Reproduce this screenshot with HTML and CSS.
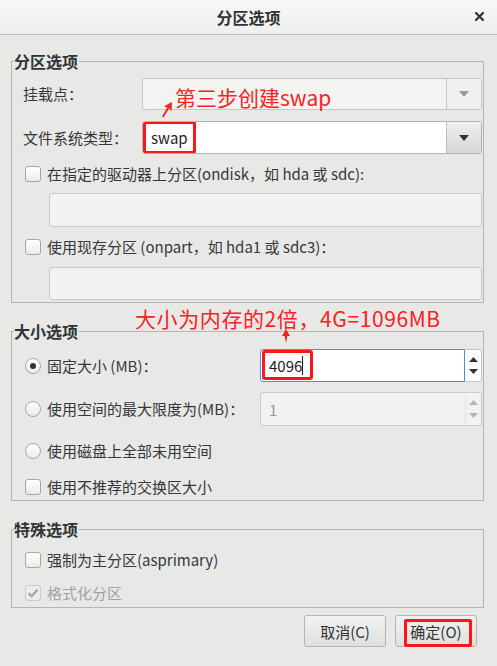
FILE: index.html
```html
<!DOCTYPE html>
<html lang="zh-CN">
<head>
<meta charset="utf-8">
<title>分区选项</title>
<link rel="stylesheet" href="styles.css">
</head>
<body>
<div class="dialog">
  <header class="titlebar">
    <span></span>
    <span class="title">分区选项</span>
    <span class="close"><svg width="9" height="9" viewBox="0 0 9 9"><path d="M1 1L8 8M8 1L1 8" stroke="#2e3436" stroke-width="2.2" stroke-linecap="square"/></svg></span>
  </header>

  <fieldset class="group g1">
    <legend>分区选项</legend>
    <div class="gbody">
      <div class="form-row r-mount">
        <span class="lbl">挂载点<span class="colon">：</span></span>
        <div class="combo combo-soft">
          <div class="combo-field"></div>
          <div class="combo-btn"><svg width="10" height="6" viewBox="0 0 10 6"><path d="M0 0H10L5 6Z" fill="#9b9b99"/></svg></div>
        </div>
      </div>
      <div class="form-row r-fs">
        <span class="lbl">文件系统类型<span class="colon">：</span></span>
        <div class="combo">
          <div class="combo-field"><span class="mark mark-swap">swap</span></div>
          <div class="combo-btn combo-btn-strong"><svg width="10" height="6" viewBox="0 0 10 6"><path d="M0 0H10L5 6Z" fill="#2e3436"/></svg></div>
        </div>
      </div>
      <div class="check-row c-ondisk"><span class="chk"></span><span>在指定的驱动器上分区(ondisk，如 hda 或 sdc):</span></div>
      <div class="entry e1"></div>
      <div class="check-row c-onpart"><span class="chk"></span><span>使用现存分区 (onpart，如 hda1 或 sdc3)<span class="colon">：</span></span></div>
      <div class="entry e2"></div>
    </div>
  </fieldset>

  <fieldset class="group g2">
    <legend>大小选项</legend>
    <div class="gbody">
      <div class="form-row2 s1">
        <div class="check-row"><span class="radio on"></span><span>固定大小 (MB)<span class="colon">：</span></span></div>
        <div class="spin">
          <div class="spin-field focus"><span class="mark mark-num">4096<i class="caret"></i></span></div>
          <div class="spin-btns">
            <svg width="9" height="5" viewBox="0 0 9 5"><path d="M0 5H9L4.5 0Z" fill="#2e3436"/></svg>
            <svg width="9" height="5" viewBox="0 0 9 5"><path d="M0 0H9L4.5 5Z" fill="#2e3436"/></svg>
          </div>
        </div>
      </div>
      <div class="form-row2 s2">
        <div class="check-row"><span class="radio"></span><span>使用空间的最大限度为(MB)<span class="colon">：</span></span></div>
        <div class="spin disabled">
          <div class="spin-field"><span class="spin-val">1</span></div>
          <div class="spin-btns">
            <svg width="9" height="5" viewBox="0 0 9 5"><path d="M0 5H9L4.5 0Z" fill="#b3b3b1"/></svg>
            <svg width="9" height="5" viewBox="0 0 9 5"><path d="M0 0H9L4.5 5Z" fill="#b3b3b1"/></svg>
          </div>
        </div>
      </div>
      <div class="check-row s3"><span class="radio"></span><span>使用磁盘上全部未用空间</span></div>
      <div class="check-row s4"><span class="chk"></span><span>使用不推荐的交换区大小</span></div>
    </div>
  </fieldset>

  <fieldset class="group g3">
    <legend>特殊选项</legend>
    <div class="gbody">
      <div class="check-row p1"><span class="chk"></span><span>强制为主分区(asprimary)</span></div>
      <div class="check-row p2 dim"><span class="chk chk-dis"><svg width="12" height="10" viewBox="0 0 12 10"><path d="M1.5 5.2L4.6 8.2L10.5 1.6" fill="none" stroke="#a9a9a7" stroke-width="2.4"/></svg></span><span>格式化分区</span></div>
    </div>
  </fieldset>

  <div class="actions">
    <button class="btn">取消(C)</button>
    <button class="btn btn-ok">确定(O)<span class="mark-ok"></span></button>
  </div>

  <div class="anno anno1">第三步创建swap</div>
  <svg class="arrow1" width="16" height="18" viewBox="0 0 16 18"><path d="M13 1L12.5 10L10 7.6L4.5 16.5L3 15.6L8.2 6.4L5 5.2Z" fill="#f52222"/></svg>
  <div class="anno anno2">大小为内存的2倍，4G=1096MB</div>
  <svg class="arrow2" width="10" height="15" viewBox="0 0 10 15"><path d="M5 0L9 7H6.4L5 14L3.6 7H1Z" fill="#f52222"/></svg>
</div>
</body>
</html>
```

FILE: styles.css
```css
* { box-sizing: border-box; }
html, body { margin: 0; padding: 0; }
body {
  width: 497px;
  height: 666px;
  overflow: hidden;
  background: #e8e8e7;
  font-family: "Noto Sans CJK SC", "Noto Sans", sans-serif;
  font-size: 15px;
  color: #33383a;
}
.dialog { position: relative; height: 666px; }

.titlebar {
  height: 35px;
  border-bottom: 1px solid #bcbcb9;
  background: linear-gradient(#f7f7f6, #efefee);
  display: grid;
  grid-template-columns: 1fr auto 1fr;
  align-items: center;
}
.title { font-weight: bold; font-size: 16px; line-height: 20px; color: #2e3436; }
.close { justify-self: end; padding-right: 13px; display: flex; margin-top: -1px; }

.colon { font-family: "Noto Sans CJK JP", "Noto Sans CJK SC", sans-serif; }

.group {
  margin: 16px 13px 0 11px;
  padding: 0 1px 2px 2px;
  border: 1px solid #b4b4b1;
  min-width: 0;
}
.group legend {
  padding: 0 1px 0 0;
  font-weight: bold;
  font-size: 16px;
  line-height: 20px;
  color: #2e3436;
}
.gbody { padding-left: 9px; }
.g2 { margin-top: 18px; padding-bottom: 3px; }
.g3 { margin-top: 18px; padding-bottom: 4px; }

.form-row { display: grid; grid-template-columns: 119px 1fr; align-items: center; }
.form-row2 { display: grid; grid-template-columns: 237px 1fr; align-items: center; }
.lbl { line-height: 20px; }
.r-mount { margin-top: 7px; height: 32px; }
.r-fs { margin-top: 11px; height: 33px; }

.combo {
  display: flex;
  height: 100%;
  border: 1px solid #b3b3b0;
  border-radius: 3px;
  overflow: hidden;
  background: #fff;
}
.combo-field { flex: 1; display: flex; }
.combo-btn {
  width: 35px;
  border-left: 1px solid #c6c6c3;
  display: flex;
  align-items: center;
  justify-content: center;
  background: #f0f0ef;
}
.combo-btn-strong { background: linear-gradient(#efefee, #d6d6d4); border-left-color: #bdbdba; }
.combo-soft { background: #f3f3f2; border-color: #c6c6c3; }

.mark { border: 3px solid #ff1515; border-radius: 3px; display: flex; align-items: center; color: #1e1e1e; }
.mark-swap { width: 53px; height: 33px; margin-top: -1px; padding-left: 5px; }
.mark-num { width: 51px; height: 30px; margin-left: 1px; padding-left: 4px; }
.caret { display: inline-block; width: 1px; height: 19px; background: #1e1e1e; margin-left: 0; }

.check-row { display: flex; align-items: center; gap: 6px; height: 20px; padding-left: 2px; line-height: 20px; white-space: nowrap; }
.c-ondisk { margin-top: 10px; }
.c-onpart { margin-top: 10px; }
.chk {
  width: 16px; height: 16px; flex: none;
  border: 1px solid #a6a6a3;
  border-radius: 3px;
  background: linear-gradient(#ffffff, #ebebea);
  display: flex; align-items: center; justify-content: center;
}
.chk-dis { border-color: #c9c9c6; background: #ececeb; }
.radio {
  width: 16px; height: 16px; flex: none;
  border: 1px solid #a6a6a3;
  border-radius: 50%;
  background: linear-gradient(#ffffff, #ebebea);
  display: flex; align-items: center; justify-content: center;
}
.radio.on::after { content: ""; width: 6px; height: 6px; border-radius: 50%; background: #2e3436; }
.dim { color: #a2a2a0; }

.entry {
  margin-left: 26px;
  border: 1px solid #c9c9c6;
  border-radius: 3px;
  background: #f2f2f1;
}
.e1 { margin-top: 9px; height: 34px; }
.e2 { margin-top: 10px; height: 33px; }

.s1 { margin-top: 8px; height: 33px; }
.s2 { margin-top: 10px; height: 34px; }
.s3 { margin-top: 15px; }
.s4 { margin-top: 16px; }
.p1 { margin-top: 11px; }
.p2 { margin-top: 13px; }

.spin { display: flex; height: 100%; }
.spin-field {
  flex: 1;
  border: 1px solid #c6c6c3;
  border-right: none;
  border-radius: 3px 0 0 3px;
  background: #fff;
  display: flex;
  align-items: flex-start;
}
.spin-field.focus { border: 1px solid #4a90d9; border-right: 1px solid #4a90d9; }
.spin-btns {
  width: 17px;
  border: 1px solid #c6c6c3;
  border-left: none;
  border-radius: 0 3px 3px 0;
  background: #fff;
  display: flex;
  flex-direction: column;
  justify-content: space-around;
  align-items: center;
  padding: 3px 0;
}
.spin.disabled .spin-field, .spin.disabled .spin-btns { background: #f2f2f1; border-color: #cbcbc8; }
.spin.disabled .spin-btns { border-left: 1px solid #e2e2e0; }
.spin-val { color: #9a9a98; align-self: center; padding-left: 8px; }

.actions { display: flex; justify-content: flex-end; gap: 9px; padding-right: 20px; margin-top: 7px; }
.btn {
  position: relative;
  width: 82px;
  height: 32px;
  border: 1px solid #b4b4b1;
  border-radius: 3px;
  background: linear-gradient(#f2f2f1, #dfdfdd);
  font-family: inherit;
  font-size: 15px;
  color: #2e3436;
  padding: 0;
}
.mark-ok {
  position: absolute;
  left: 8px; right: 4px; top: 3px; bottom: -1px;
  border: 3px solid #ff1515;
  border-radius: 2px;
}

.anno {
  position: absolute;
  color: #f72222;
  font-size: 21px;
  line-height: 24px;
  white-space: nowrap;
}
.anno1 { left: 175px; top: 85px; }
.anno2 { left: 135px; top: 306px; letter-spacing: 0.6px; }
.arrow1 { position: absolute; left: 159px; top: 101px; }
.arrow2 { position: absolute; left: 281px; top: 329px; }
```
